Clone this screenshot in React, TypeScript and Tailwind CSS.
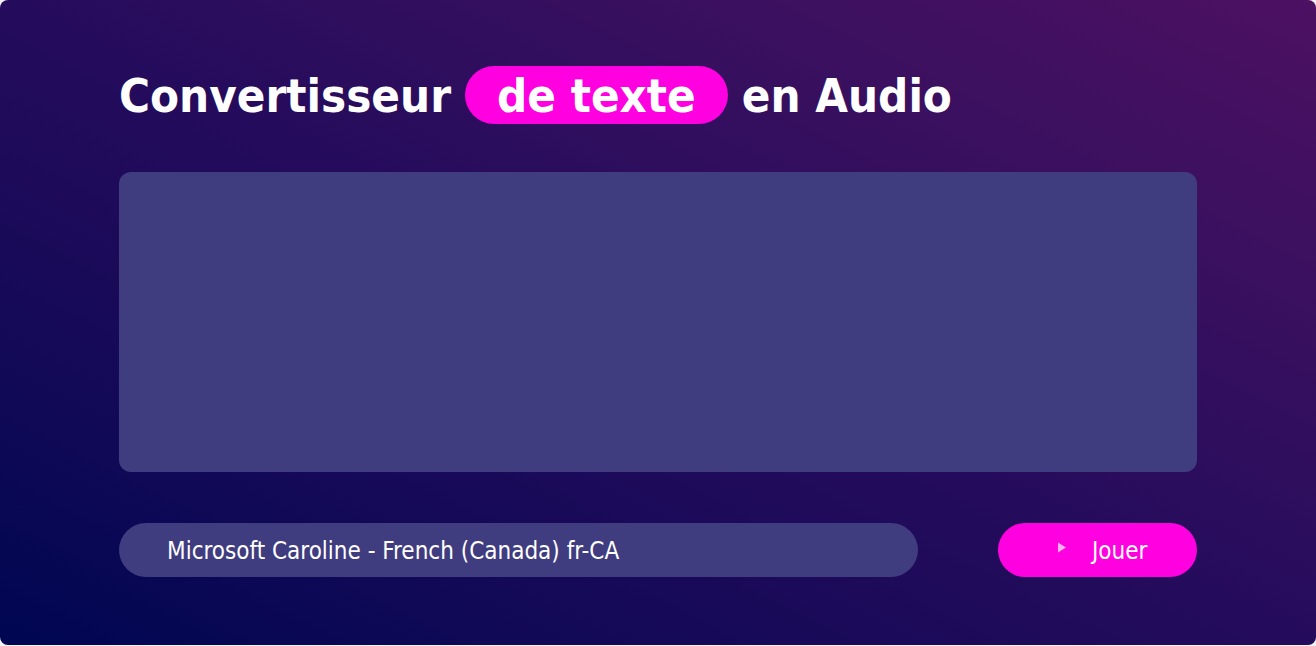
import { useState } from "react";

const voices = ["Microsoft Caroline - French (Canada) fr-CA"];

export default function App() {
  const [text, setText] = useState("");
  const [voice, setVoice] = useState(voices[0]);

  return (
    <div className="h-[646px] w-full bg-[#f3f3f5]" style={{ fontFamily: '"DejaVu Sans Condensed", "DejaVu Sans", sans-serif' }}>
      <main className="flex h-[645px] w-full flex-col rounded-lg bg-gradient-to-tr from-[#000652] via-[#250b5c] to-[#4d1062] px-[119px] pt-[66px]">
        <h1 className="flex items-center text-[47px] font-bold leading-none text-white">
          <span>Convertisseur</span>
          <span className="mx-[14px] flex h-[58px] items-center rounded-full bg-[#ff00e0] px-[32px]">de texte</span>
          <span>en Audio</span>
        </h1>

        <textarea
          value={text}
          onChange={(event) => setText(event.target.value)}
          className="mt-[48px] h-[300px] w-full resize-none rounded-xl bg-[#403c80] p-6 text-xl text-white outline-none"
        />

        <div className="mt-[51px] flex items-center justify-between">
          <select
            value={voice}
            onChange={(event) => setVoice(event.target.value)}
            className="h-[54px] w-[799px] appearance-none rounded-full bg-[#403c80] pl-[48px] pt-[2px] text-[24px] text-white outline-none"
          >
            {voices.map((v) => (
              <option key={v}>{v}</option>
            ))}
          </select>
          <button
            type="button"
            className="flex h-[54px] w-[199px] items-center gap-[25px] rounded-full bg-[#ff00e0] pl-[59px] pt-[2px] text-[24px] text-white"
          >
            <svg width="10" height="11" viewBox="0 0 10 11" className="mb-[7px]">
              <path d="M1 0.5 L9 5.5 L1 10.5 Z" fill="#fbb0f0" />
            </svg>
            <span>Jouer</span>
          </button>
        </div>
      </main>
    </div>
  );
}
